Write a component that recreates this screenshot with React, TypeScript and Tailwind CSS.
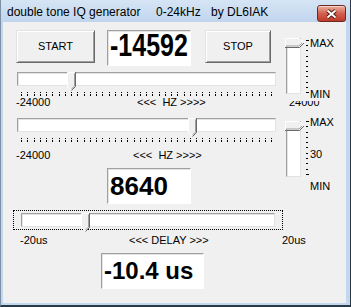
import React from "react";

const LABEL = "shrink-0 text-[11px] leading-[12px] text-black whitespace-pre";

function HThumb() {
  return (
    <svg width="9" height="19" viewBox="0 0 9 19">
      <path d="M0.5 0.5 H8.5 V14.5 L4.5 18.5 L0.5 14.5 Z" fill="#f0f0f0" />
      <path d="M0.5 14.5 V0.5 H8" stroke="#ffffff" fill="none" />
      <path d="M8.5 0 V14.5 L4.5 18.5" stroke="#696969" fill="none" />
      <path d="M7.5 1.5 V14 L4.5 17" stroke="#a0a0a0" fill="none" />
      <path d="M0.5 14.5 L4 18" stroke="#ffffff" fill="none" />
    </svg>
  );
}

function VThumb() {
  return (
    <svg width="19" height="10" viewBox="0 0 19 10">
      <path d="M0.5 0.5 H14.5 L18.5 4.5 L14.5 8.5 H0.5 Z" fill="#f0f0f0" />
      <path d="M0.5 8.5 V0.5 H14.5 L18 4" stroke="#ffffff" fill="none" />
      <path d="M0 9.5 H14.5 L19 5" stroke="#696969" fill="none" />
      <path d="M1 8 H14 L17 5" stroke="#a0a0a0" fill="none" />
    </svg>
  );
}

function HSlider({ value, min, max, width }: { value: number; min: number; max: number; width: number }) {
  const left = 1 + ((value - min) / (max - min)) * (width - 9);
  return (
    <div className="relative h-[19px]" style={{ width }}>
      <div className="mt-px h-[14px] bg-white border border-t-[#a0a0a0] border-l-[#a0a0a0] border-b-[#e3e3e3] border-r-[#e3e3e3] shadow-[inset_1px_1px_0_#e3e3e3]" />
      <div className="absolute top-0" style={{ left }}>
        <HThumb />
      </div>
    </div>
  );
}

function HTicks() {
  return (
    <div className="ml-[18px] w-[251px] h-[4px] mt-px flex justify-between">
      {Array.from({ length: 41 }).map((_, i) => (
        <div key={i} className="flex flex-col w-px">
          <div className="h-px bg-black" />
          <div className="h-px" />
          <div className="h-[2px] bg-black" />
        </div>
      ))}
    </div>
  );
}

function VTicks({ h }: { h: number }) {
  return (
    <div className="flex flex-col justify-between w-[3px]" style={{ height: h }}>
      {Array.from({ length: 11 }).map((_, i) => (
        <div key={i} className={i === 0 || i === 10 ? "h-px w-[3px] bg-black" : "h-px w-[2px] bg-black"} />
      ))}
    </div>
  );
}

function VTrack() {
  return (
    <div className="relative w-[19px] h-[58px]">
      <div className="ml-px mt-px w-[15px] h-[56px] bg-white border border-t-[#a0a0a0] border-l-[#a0a0a0] border-b-[#e3e3e3] border-r-[#e3e3e3] shadow-[inset_1px_1px_0_#e3e3e3]" />
      <div className="absolute top-0 left-0">
        <VThumb />
      </div>
    </div>
  );
}

function Button({ children, w }: { children: React.ReactNode; w: string }) {
  return (
    <div
      className={`${w} h-[33px] flex items-center justify-center bg-[#f0f0f0] border border-t-[#e3e3e3] border-l-[#e3e3e3] border-b-[#696969] border-r-[#696969] shadow-[inset_1px_1px_0_#ffffff,inset_-1px_-1px_0_#a0a0a0] text-[11px] text-black`}
    >
      {children}
    </div>
  );
}

function NumBox({ children, w, className = "" }: { children: React.ReactNode; w: string; className?: string }) {
  return (
    <div
      className={`${w} shrink-0 h-[36px] flex items-center pl-[2px] bg-white border border-t-[#a0a0a0] border-l-[#a0a0a0] border-b-[#ffffff] border-r-[#ffffff] shadow-[inset_1px_1px_0_#e3e3e3] font-bold text-black ${className}`}
    >
      {children}
    </div>
  );
}

export default function App() {
  return (
    <div
      className="w-[351px] h-[307px] flex flex-col bg-[#c3d7ee] border-l border-r border-b-2 border-l-[#7d8fa3] border-r-[#2c3947] border-b-[#2c3947] overflow-hidden"
      style={{ fontFamily: '"Liberation Sans", Arial, sans-serif' }}
    >
      {/* title bar */}
      <div className="h-[22px] flex items-start bg-linear-to-b from-[#d6e5f5] to-[#c0d5ed]">
        <div className="flex h-[22px] items-center pl-[6px] pt-px text-[12px] text-black whitespace-pre">
          <span className="shrink-0 w-[149px]">double tone IQ generator</span>
          <span className="shrink-0 w-[55px]">0-24kHz</span>
          <span className="shrink-0">by DL6IAK</span>
        </div>
        <div className="ml-auto mr-[4px] mt-[5px] w-[29px] h-[17px] rounded-[3px] border border-[#6b2a20] bg-linear-to-b from-[#eab0a2] via-[#d4604f] to-[#c0392a] shadow-[inset_0_1px_0_#f6d2c8] flex items-center justify-center">
          <svg width="13" height="10" viewBox="0 0 13 10">
            <path d="M2.5 1.5 L10.5 8.5 M10.5 1.5 L2.5 8.5" stroke="#4a1510" strokeWidth="3.8" />
            <path d="M2.5 1.5 L10.5 8.5 M10.5 1.5 L2.5 8.5" stroke="#ffffff" strokeWidth="2" />
          </svg>
        </div>
      </div>

      {/* client area */}
      <div className="ml-[2px] mr-[4px] mb-[2px] flex-1 bg-[#f0f0f0] flex">
        {/* left column */}
        <div className="w-[280px] shrink-0 flex flex-col">
          <div className="flex items-start pt-[8px]">
            <div className="ml-[13px] shrink-0">
              <Button w="w-[79px]">START</Button>
            </div>
            <NumBox w="w-[84px]" className="ml-[12px] text-[25px] leading-none">
              <span className="relative -top-[3px] inline-block scale-y-[1.28]">-14592</span>
            </NumBox>
            <div className="ml-[14px] shrink-0">
              <Button w="w-[66px]">STOP</Button>
            </div>
          </div>

          {/* slider 1 */}
          <div className="mt-[5px] ml-[14px]">
            <HSlider value={-14592} min={-24000} max={24000} width={259} />
          </div>
          <HTicks />
          <div className="flex">
            <span className={`${LABEL} ml-[13px] w-[121px]`}>-24000</span>
            <span className={`${LABEL} w-[152px]`}>{"<<<  HZ >>>>"}</span>
            <span className={`${LABEL} [clip-path:inset(5px_0_0_0)]`}>24000</span>
          </div>

          {/* slider 2 */}
          <div className="mt-[9px] ml-[14px]">
            <HSlider value={8640} min={-24000} max={24000} width={259} />
          </div>
          <HTicks />
          <div className="flex mt-[7px]">
            <span className={`${LABEL} ml-[13px] w-[117px]`}>-24000</span>
            <span className={LABEL}>{"<<<  HZ >>>>"}</span>
          </div>

          <NumBox w="w-[84px]" className="mt-[7px] ml-[104px] text-[26px] leading-none">
            8640
          </NumBox>

          {/* delay slider */}
          <div className="mt-[6px] ml-[10px] w-[270px] h-[20px] border border-dotted border-black pt-px">
            <div className="ml-[7px]">
              <HSlider value={-10.4} min={-20} max={20} width={254} />
            </div>
          </div>
          <div className="flex mt-[4px]">
            <span className={`${LABEL} ml-[17px] w-[109px]`}>-20us</span>
            <span className={`${LABEL} w-[153px]`}>{"<<< DELAY >>>"}</span>
            <span className={LABEL}>20us</span>
          </div>

          <NumBox w="w-[103px]" className="mt-[7px] ml-[98px] text-[24px] leading-none">
            -10.4 us
          </NumBox>
        </div>

        {/* right column: vertical sliders */}
        <div className="flex-1 flex flex-col">
          <div className="flex items-start mt-[15px]">
            <div className="ml-[2px]">
              <VTrack />
            </div>
            <div className="ml-[2px] mt-[3px]">
              <VTicks h={53} />
            </div>
            <div className="ml-px h-[63px] flex flex-col justify-between">
              <span className={LABEL}>MAX</span>
              <span className={LABEL}>MIN</span>
            </div>
          </div>
          <div className="flex items-start mt-[16px]">
            <div className="ml-[2px] mt-[4px]">
              <VTrack />
            </div>
            <div className="ml-[2px] mt-[5px]">
              <VTicks h={54} />
            </div>
            <div className="ml-px h-[76px] flex flex-col justify-between">
              <span className={LABEL}>MAX</span>
              <span className={LABEL}>30</span>
              <span className={LABEL}>MIN</span>
            </div>
          </div>
        </div>
      </div>
    </div>
  );
}
